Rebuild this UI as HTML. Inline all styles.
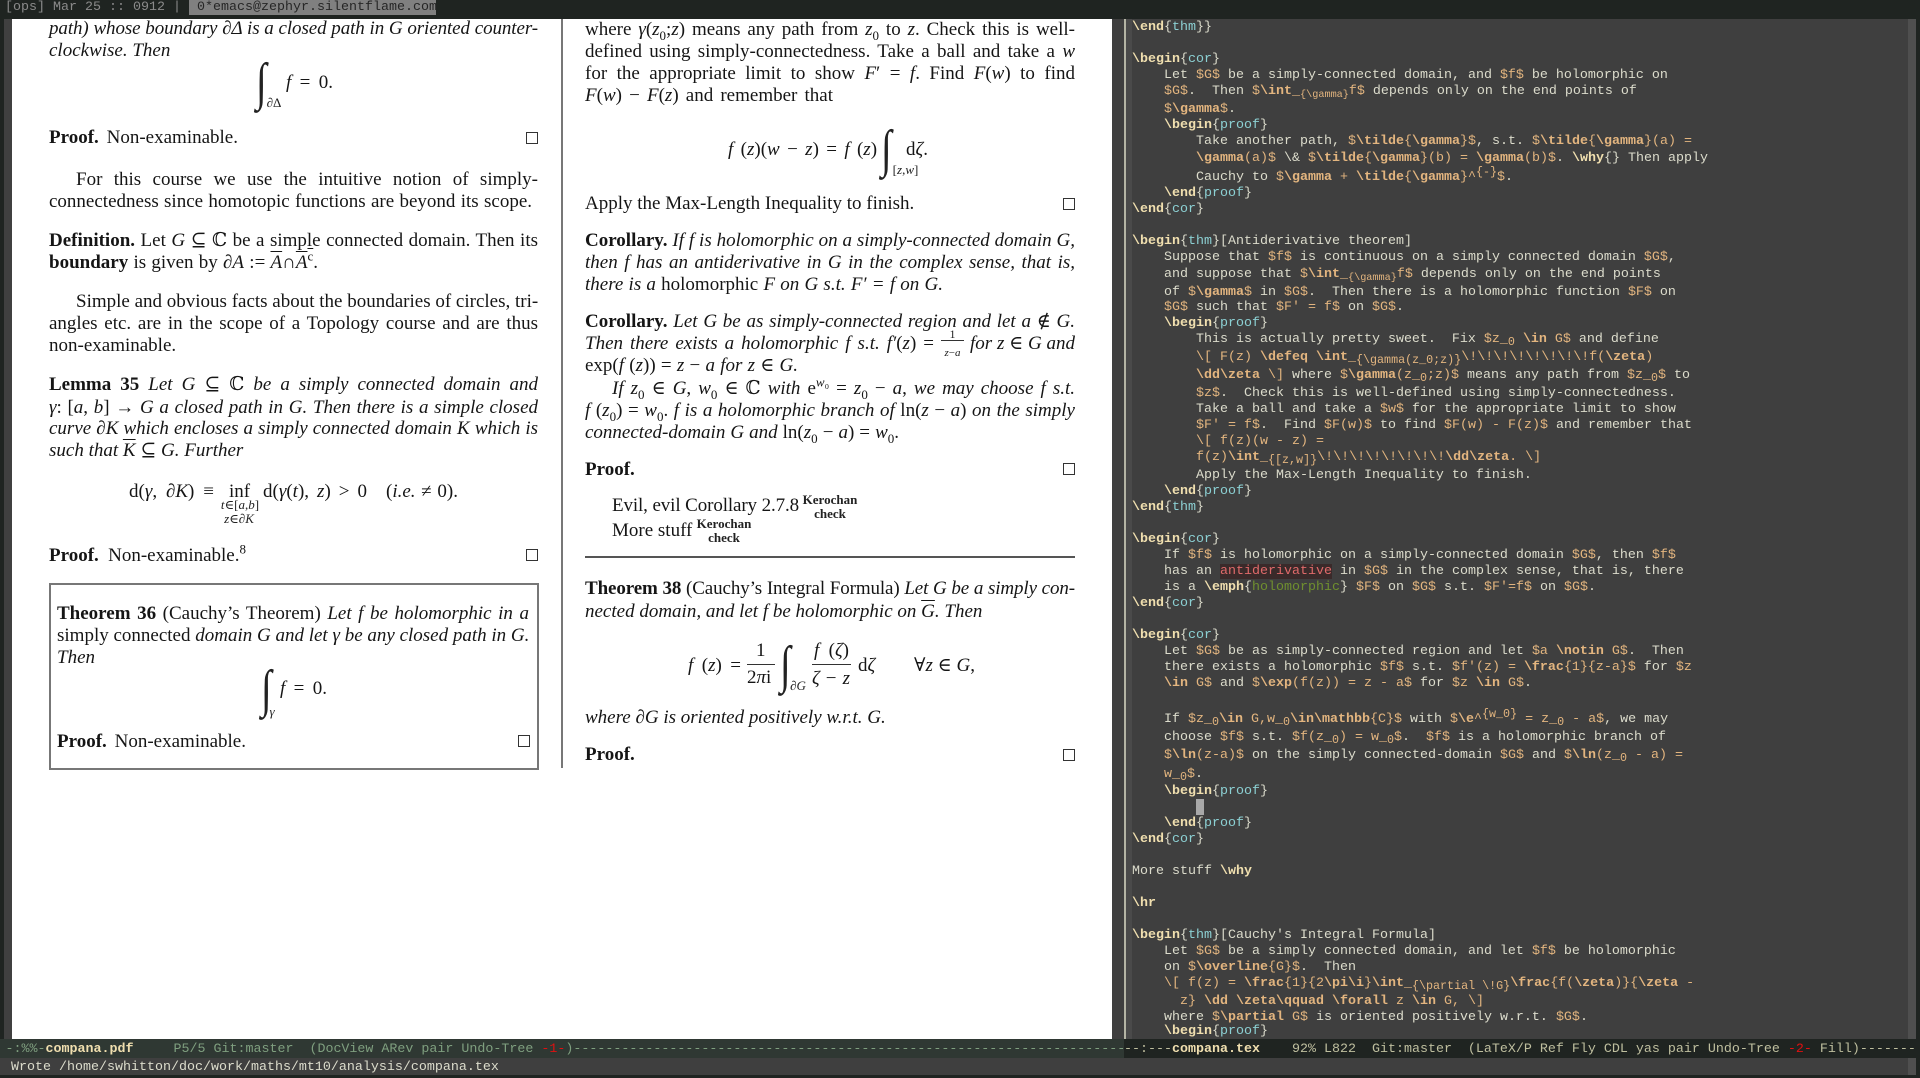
<!DOCTYPE html>
<html><head><meta charset="utf-8"><title>compana</title>
<style>
html,body{margin:0;padding:0;background:#1f2421;width:1920px;height:1078px;overflow:hidden}
div{position:absolute}
.p{font:19px/22px "Liberation Serif","DejaVu Serif",serif;color:#151515;white-space:nowrap;text-align:justify;text-align-last:justify;height:22px;margin-top:3px}
.n{text-align:left;text-align-last:left}
.p sub,.p sup{font-size:13px;line-height:0}
.p u{text-decoration:overline;}
.sm{font:13px/14px "Liberation Serif","DejaVu Serif",serif;color:#222;white-space:nowrap;text-align:center;text-align-last:center}
.kc{font:bold 13px/14px "Liberation Serif",serif;color:#222;white-space:nowrap;text-align:center}
.int{font:46px/50px "Liberation Serif","DejaVu Serif",serif;color:#222;white-space:nowrap;transform-origin:0 0;transform:scale(.85,1.13)}
.sq{width:10px;height:10px;border:1px solid #333;background:#fff}
.t,.m{font:13.333px/16px "Liberation Mono","DejaVu Sans Mono",monospace;white-space:pre;height:16px}
.t{left:1132px;color:#dcdccc;margin-top:2px}
.t u{color:#e3b57f;text-decoration:none}
.t u b{font-weight:bold}
.t em{font-style:normal;font-weight:bold;color:#f0dfaf}
.t s{color:#8cd0d3;text-decoration:none}
.t small{display:inline-block;position:relative;top:3px;font-size:10.2px;line-height:10px}
.t small.a{font-size:11.7px}
.t small.h{top:-5px;font-size:11.7px}
</style></head><body>
<div style="left:0;top:0;width:1920px;height:19px;background:#1f2421"></div>
<div class="m" style="left:5px;top:0;color:#8a8a8a">[ops] Mar 25 :: 0912 |</div>
<div style="left:189px;top:0;width:247px;height:15px;background:#808080"></div>
<div class="m" style="left:197px;top:0;color:#262626">0*emacs@zephyr.silentflame.com</div>

<div style="left:4px;top:19px;width:8px;height:1020px;background:#404040"></div>
<div style="left:12px;top:19px;width:1100px;height:1020px;background:#fff"></div>
<div style="left:1112px;top:19px;width:12px;height:1020px;background:#3f3f3f"></div>
<div style="left:1124px;top:19px;width:2px;height:1020px;background:#b5b5a5"></div>
<div style="left:1126px;top:19px;width:6px;height:1020px;background:#4a4a4a"></div>
<div style="left:1132px;top:19px;width:776px;height:1020px;background:#3f3f3f"></div>
<div style="left:1908px;top:19px;width:8px;height:1020px;background:#4f4f4f"></div>

<!-- left PDF column -->
<div class="p" style="left:49px;top:15px;width:489px;letter-spacing:-.09px"><i>path) whose boundary ∂Δ is a closed path in G oriented counter-</i></div>
<div class="p" style="left:49px;top:37px;width:115px"><i>clockwise. Then</i></div>
<div class="int" style="left:256px;top:54px">∫</div>
<div class="sm" style="left:265px;top:96px;width:18px">∂Δ</div>
<div class="p" style="left:286px;top:69px;width:47px"><i>f</i> = 0.</div>
<div class="p" style="left:49px;top:124px;width:189px"><b>Proof.</b> Non-examinable.</div>
<div class="sq" style="left:526px;top:132px"></div>
<div class="p" style="left:76px;top:166px;width:462px">For this course we use the intuitive notion of simply-</div>
<div class="p" style="left:49px;top:188px;width:483px">connectedness since homotopic functions are beyond its scope.</div>
<div class="p" style="left:49px;top:227px;width:489px"><b>Definition.</b> Let <i>G</i> ⊆ ℂ be a simple connected domain. Then its</div>
<div class="p" style="left:49px;top:249px;width:269px"><b>boundary</b> is given by <i>∂A</i> := <u><i>A</i></u>∩<u><i>A</i><sup>c</sup></u>.</div>
<div class="p" style="left:76px;top:288px;width:462px">Simple and obvious facts about the boundaries of circles, tri-</div>
<div class="p" style="left:49px;top:310px;width:489px">angles etc. are in the scope of a Topology course and are thus</div>
<div class="p" style="left:49px;top:332px;width:128px">non-examinable.</div>
<div class="p" style="left:49px;top:371px;width:489px"><b>Lemma 35</b> <i>Let G ⊆</i> ℂ <i>be a simply connected domain and</i></div>
<div class="p" style="left:49px;top:394px;width:489px"><i>γ</i>: [<i>a</i>, <i>b</i>] → <i>G a closed path in G. Then there is a simple closed</i></div>
<div class="p" style="left:49px;top:415px;width:489px"><i>curve ∂K which encloses a simply connected domain K which is</i></div>
<div class="p" style="left:49px;top:437px;width:188px"><i>such that <u>K</u> ⊆ G. Further</i></div>
<div class="p" style="left:129px;top:478px;width:85px">d(<i>γ</i>, <i>∂K</i>) ≡</div>
<div class="p" style="left:229px;top:478px;width:21px">inf</div>
<div class="p" style="left:263px;top:478px;width:104px">d(<i>γ</i>(<i>t</i>), <i>z</i>) &gt; 0</div>
<div class="p" style="left:386px;top:478px;width:72px">(<i>i.e.</i> ≠ 0).</div>
<div class="sm" style="left:219px;top:498px;width:42px"><i>t</i>∈[<i>a</i>,<i>b</i>]</div>
<div class="sm" style="left:223px;top:512px;width:32px"><i>z</i>∈<i>∂K</i></div>
<div class="p" style="left:49px;top:542px;width:197px"><b>Proof.</b> Non-examinable.<sup>8</sup></div>
<div class="sq" style="left:526px;top:549px"></div>
<div style="left:49px;top:583px;width:486px;height:183px;border:2px solid #777"></div>
<div class="p" style="left:57px;top:600px;width:472px"><b>Theorem 36</b> (Cauchy’s Theorem) <i>Let f be holomorphic in a</i></div>
<div class="p" style="left:57px;top:622px;width:471px">simply connected <i>domain G and let γ be any closed path in G.</i></div>
<div class="p" style="left:57px;top:644px;width:36px"><i>Then</i></div>
<div class="int" style="left:261px;top:661px">∫</div>
<div class="sm" style="left:267px;top:705px;width:10px"><i>γ</i></div>
<div class="p" style="left:280px;top:675px;width:47px"><i>f</i> = 0.</div>
<div class="p" style="left:57px;top:728px;width:189px"><b>Proof.</b> Non-examinable.</div>
<div class="sq" style="left:518px;top:735px"></div>

<div style="left:561px;top:19px;width:2px;height:749px;background:#777"></div>

<!-- right PDF column -->
<div class="p" style="left:585px;top:16px;width:490px">where <i>γ</i>(<i>z</i><sub>0</sub>;<i>z</i>) means any path from <i>z</i><sub>0</sub> to <i>z</i>. Check this is well-</div>
<div class="p" style="left:585px;top:38px;width:490px">defined using simply-connectedness. Take a ball and take a <i>w</i></div>
<div class="p" style="left:585px;top:60px;width:490px">for the appropriate limit to show <i>F</i>′ = <i>f</i>. Find <i>F</i>(<i>w</i>) to find</div>
<div class="p" style="left:585px;top:82px;width:248px"><i>F</i>(<i>w</i>) − <i>F</i>(<i>z</i>) and remember that</div>
<div class="p" style="left:728px;top:136px;width:149px"><i>f</i> (<i>z</i>)(<i>w</i> − <i>z</i>) = <i>f</i> (<i>z</i>)</div>
<div class="int" style="left:881px;top:121px">∫</div>
<div class="sm" style="left:891px;top:163px;width:29px">[<i>z</i>,<i>w</i>]</div>
<div class="p" style="left:906px;top:136px;width:25px">d<i>ζ</i>.</div>
<div class="p" style="left:585px;top:190px;width:325px">Apply the Max-Length Inequality to finish.</div>
<div class="sq" style="left:1063px;top:198px"></div>
<div class="p" style="left:585px;top:227px;width:490px"><b>Corollary.</b> <i>If f is holomorphic on a simply-connected domain G,</i></div>
<div class="p" style="left:585px;top:249px;width:490px"><i>then f has an antiderivative in G in the complex sense, that is,</i></div>
<div class="p" style="left:585px;top:271px;width:358px"><i>there is a</i> holomorphic <i>F on G s.t. F′ = f on G.</i></div>
<div class="p" style="left:585px;top:308px;width:490px"><b>Corollary.</b> <i>Let G be as simply-connected region and let a ∉ G.</i></div>
<div class="p" style="left:585px;top:330px;width:349px"><i>Then there exists a holomorphic f s.t. f′</i>(<i>z</i>) =</div>
<div class="sm" style="left:941px;top:328px;width:23px;font-size:12px;line-height:13px;border-bottom:1px solid #333;height:12px">1</div>
<div class="sm" style="left:941px;top:347px;width:23px;font-size:11px;line-height:12px"><i>z</i>−<i>a</i></div>
<div class="p" style="left:970px;top:330px;width:105px"><i>for z ∈ G and</i></div>
<div class="p" style="left:585px;top:352px;width:213px">exp(<i>f</i> (<i>z</i>)) = <i>z</i> − <i>a for z ∈ G.</i></div>
<div class="p" style="left:612px;top:375px;width:463px"><i>If z</i><sub>0</sub> ∈ <i>G</i>, <i>w</i><sub>0</sub> ∈ ℂ <i>with</i> e<sup><i>w</i>₀</sup> = <i>z</i><sub>0</sub> − <i>a</i>, <i>we may choose f s.t.</i></div>
<div class="p" style="left:585px;top:397px;width:490px"><i>f</i> (<i>z</i><sub>0</sub>) = <i>w</i><sub>0</sub>. <i>f is a holomorphic branch of</i> ln(<i>z</i> − <i>a</i>) <i>on the simply</i></div>
<div class="p" style="left:585px;top:419px;width:314px"><i>connected-domain G and</i> ln(<i>z</i><sub>0</sub> − <i>a</i>) = <i>w</i><sub>0</sub>.</div>
<div class="p" style="left:585px;top:456px;width:49px"><b>Proof.</b></div>
<div class="sq" style="left:1063px;top:463px"></div>
<div class="p" style="left:612px;top:492px;width:187px;letter-spacing:-.12px">Evil, evil Corollary 2.7.8</div>
<div class="kc" style="left:800px;top:493px;width:60px">Kerochan</div>
<div class="kc" style="left:800px;top:507px;width:60px">check</div>
<div class="p" style="left:612px;top:517px;width:80px">More stuff</div>
<div class="kc" style="left:694px;top:517px;width:60px">Kerochan</div>
<div class="kc" style="left:694px;top:531px;width:60px">check</div>
<div style="left:585px;top:556px;width:490px;height:2px;background:#555"></div>
<div class="p" style="left:585px;top:575px;width:490px;letter-spacing:-.11px"><b>Theorem 38</b> (Cauchy’s Integral Formula) <i>Let G be a simply con-</i></div>
<div class="p" style="left:585px;top:598px;width:396px"><i>nected domain, and let f be holomorphic on <u>G</u>. Then</i></div>
<div class="p" style="left:688px;top:652px;width:53px"><i>f</i> (<i>z</i>) =</div>
<div class="p n" style="left:756px;top:637px;width:20px">1</div>
<div style="left:747px;top:664px;width:28px;height:1px;background:#333"></div>
<div class="p n" style="left:747px;top:664px;width:30px">2<i>π</i>i</div>
<div class="int" style="left:780px;top:637px">∫</div>
<div class="sm" style="left:790px;top:679px;width:16px"><i>∂G</i></div>
<div class="p" style="left:814px;top:637px;width:35px"><i>f</i> (<i>ζ</i>)</div>
<div style="left:812px;top:664px;width:39px;height:1px;background:#333"></div>
<div class="p" style="left:812px;top:665px;width:38px"><i>ζ</i> − <i>z</i></div>
<div class="p" style="left:858px;top:652px;width:18px">d<i>ζ</i></div>
<div class="p" style="left:914px;top:652px;width:57px">∀<i>z</i> ∈ <i>G</i>,</div>
<div class="p" style="left:585px;top:704px;width:296px"><i>where ∂G is oriented positively w.r.t. G.</i></div>
<div class="p" style="left:585px;top:741px;width:49px"><b>Proof.</b></div>
<div class="sq" style="left:1063px;top:749px"></div>

<!-- code pane -->
<div class="t" style="top:18px"><em>\end</em>{<s>thm</s>}}</div>
<div class="t" style="top:50px"><em>\begin</em>{<s>cor</s>}</div>
<div class="t" style="top:66px">    Let <u>$G$</u> be a simply-connected domain, and <u>$f$</u> be holomorphic on</div>
<div class="t" style="top:82px">    <u>$G$</u>.  Then <u>$<b>\int</b>_<small>{\gamma}</small>f$</u> depends only on the end points of</div>
<div class="t" style="top:100px">    <u>$<b>\gamma</b>$</u>.</div>
<div class="t" style="top:116px">    <em>\begin</em>{<s>proof</s>}</div>
<div class="t" style="top:132px">        Take another path, <u>$<b>\tilde</b>{<b>\gamma</b>}$</u>, s.t. <u>$<b>\tilde</b>{<b>\gamma</b>}(a) =</u></div>
<div class="t" style="top:149px">        <u><b>\gamma</b>(a)$</u> \&amp; <u>$<b>\tilde</b>{<b>\gamma</b>}(b) = <b>\gamma</b>(b)$</u>. <em>\why</em>{} Then apply</div>
<div class="t" style="top:168px">        Cauchy to <u>$<b>\gamma</b> + <b>\tilde</b>{<b>\gamma</b>}^<small class="h">{-}</small>$</u>.</div>
<div class="t" style="top:184px">    <em>\end</em>{<s>proof</s>}</div>
<div class="t" style="top:200px"><em>\end</em>{<s>cor</s>}</div>
<div class="t" style="top:232px"><em>\begin</em>{<s>thm</s>}[Antiderivative theorem]</div>
<div class="t" style="top:248px">    Suppose that <u>$f$</u> is continuous on a simply connected domain <u>$G$</u>,</div>
<div class="t" style="top:265px">    and suppose that <u>$<b>\int</b>_<small>{\gamma}</small>f$</u> depends only on the end points</div>
<div class="t" style="top:283px">    of <u>$<b>\gamma</b>$</u> in <u>$G$</u>.  Then there is a holomorphic function <u>$F$</u> on</div>
<div class="t" style="top:298px">    <u>$G$</u> such that <u>$F' = f$</u> on <u>$G$</u>.</div>
<div class="t" style="top:314px">    <em>\begin</em>{<s>proof</s>}</div>
<div class="t" style="top:330px">        This is actually pretty sweet.  Fix <u>$z_<small class="a">0</small> <b>\in</b> G$</u> and define</div>
<div class="t" style="top:348px">        <u>\[ F(z) <b>\defeq</b> <b>\int</b>_<small class="a">{\gamma(z_0;z)}</small>\!\!\!\!\!\!\!\!f(<b>\zeta</b>)</u></div>
<div class="t" style="top:366px">        <u><b>\dd\zeta</b> \]</u> where <u>$<b>\gamma</b>(z_<small class="a">0</small>;z)$</u> means any path from <u>$z_<small class="a">0</small>$</u> to</div>
<div class="t" style="top:384px">        <u>$z$</u>.  Check this is well-defined using simply-connectedness.</div>
<div class="t" style="top:400px">        Take a ball and take a <u>$w$</u> for the appropriate limit to show</div>
<div class="t" style="top:416px">        <u>$F' = f$</u>.  Find <u>$F(w)$</u> to find <u>$F(w) - F(z)$</u> and remember that</div>
<div class="t" style="top:432px">        <u>\[ f(z)(w - z) =</u></div>
<div class="t" style="top:448px">        <u>f(z)<b>\int</b>_<small class="a">{[z,w]}</small>\!\!\!\!\!\!\!\!<b>\dd\zeta</b>. \]</u></div>
<div class="t" style="top:466px">        Apply the Max-Length Inequality to finish.</div>
<div class="t" style="top:482px">    <em>\end</em>{<s>proof</s>}</div>
<div class="t" style="top:498px"><em>\end</em>{<s>thm</s>}</div>
<div class="t" style="top:530px"><em>\begin</em>{<s>cor</s>}</div>
<div class="t" style="top:546px">    If <u>$f$</u> is holomorphic on a simply-connected domain <u>$G$</u>, then <u>$f$</u></div>
<div class="t" style="top:562px">    has an <span style="background:#3a2a2a;color:#e06a6a">antiderivative</span> in <u>$G$</u> in the complex sense, that is, there</div>
<div class="t" style="top:578px">    is a <em>\emph</em>{<span style="color:#6f8f2f">holomorphic</span>} <u>$F$</u> on <u>$G$</u> s.t. <u>$F'=f$</u> on <u>$G$</u>.</div>
<div class="t" style="top:594px"><em>\end</em>{<s>cor</s>}</div>
<div class="t" style="top:626px"><em>\begin</em>{<s>cor</s>}</div>
<div class="t" style="top:642px">    Let <u>$G$</u> be as simply-connected region and let <u>$a <b>\notin</b> G$</u>.  Then</div>
<div class="t" style="top:658px">    there exists a holomorphic <u>$f$</u> s.t. <u>$f'(z) = <b>\frac</b>{1}{z-a}$</u> for <u>$z</u></div>
<div class="t" style="top:674px">    <u><b>\in</b> G$</u> and <u>$<b>\exp</b>(f(z)) = z - a$</u> for <u>$z <b>\in</b> G$</u>.</div>
<div class="t" style="top:710px">    If <u>$z_<small class="a">0</small><b>\in</b> G,w_<small class="a">0</small><b>\in\mathbb</b>{C}$</u> with <u>$<b>\e</b>^<small class="h">{w_0}</small> = z_<small class="a">0</small> - a$</u>, we may</div>
<div class="t" style="top:728px">    choose <u>$f$</u> s.t. <u>$f(z_<small class="a">0</small>) = w_<small class="a">0</small>$</u>.  <u>$f$</u> is a holomorphic branch of</div>
<div class="t" style="top:746px">    <u>$<b>\ln</b>(z-a)$</u> on the simply connected-domain <u>$G$</u> and <u>$<b>\ln</b>(z_<small class="a">0</small> - a) =</u></div>
<div class="t" style="top:765px">    <u>w_<small class="a">0</small>$</u>.</div>
<div class="t" style="top:782px">    <em>\begin</em>{<s>proof</s>}</div>
<div style="left:1196px;top:799px;width:8px;height:16px;background:#a8a8a8"></div>
<div class="t" style="top:814px">    <em>\end</em>{<s>proof</s>}</div>
<div class="t" style="top:830px"><em>\end</em>{<s>cor</s>}</div>
<div class="t" style="top:862px">More stuff <em>\why</em></div>
<div class="t" style="top:894px"><em>\hr</em></div>
<div class="t" style="top:926px"><em>\begin</em>{<s>thm</s>}[Cauchy's Integral Formula]</div>
<div class="t" style="top:942px">    Let <u>$G$</u> be a simply connected domain, and let <u>$f$</u> be holomorphic</div>
<div class="t" style="top:958px">    on <u>$<b>\overline</b>{G}$</u>.  Then</div>
<div class="t" style="top:974px">    <u>\[ f(z) = <b>\frac</b>{1}{2<b>\pi\i</b>}<b>\int</b>_<small class="a">{\partial \!G}</small><b>\frac</b>{f(<b>\zeta</b>)}{<b>\zeta</b> -</u></div>
<div class="t" style="top:992px">      <u>z} <b>\dd \zeta\qquad \forall</b> z <b>\in</b> G, \]</u></div>
<div class="t" style="top:1008px">    where <u>$<b>\partial</b> G$</u> is oriented positively w.r.t. <u>$G$</u>.</div>
<div class="t" style="top:1022px;overflow:hidden;height:15px">    <em>\begin</em>{<s>proof</s>}</div>

<!-- mode lines -->
<div style="left:0;top:1039px;width:1124px;height:19px;background:#2f3833"></div>
<div style="left:1124px;top:1039px;width:792px;height:19px;background:#1f2421"></div>
<div class="m" style="left:5.5px;top:1042px;color:#7f9f7f;width:1118px;overflow:hidden">-:%%-<b style="color:#f0dfaf">compana.pdf</b>     P5/5 Git:master  (DocView ARev pair Undo-Tree <span style="color:#e01010">-1-</span>)--------------------------------------------------------------------------------------------------------------------------------------</div>
<div class="m" style="left:1124px;top:1042px;color:#bfbf9f;width:792px;overflow:hidden">--:---<b style="color:#f0dfaf">compana.tex</b>    92% L822  Git:master  (LaTeX/P Ref Fly CDL yas pair Undo-Tree <span style="color:#e01010">-2-</span> Fill)------------------------</div>
<div style="left:0;top:1058px;width:1908px;height:17px;background:#3f3f3f"></div>
<div style="left:1908px;top:1058px;width:8px;height:17px;background:#4f4f4f"></div>
<div class="m" style="left:11px;top:1060px;color:#dcdccc">Wrote /home/swhitton/doc/work/maths/mt10/analysis/compana.tex</div>
</body></html>
